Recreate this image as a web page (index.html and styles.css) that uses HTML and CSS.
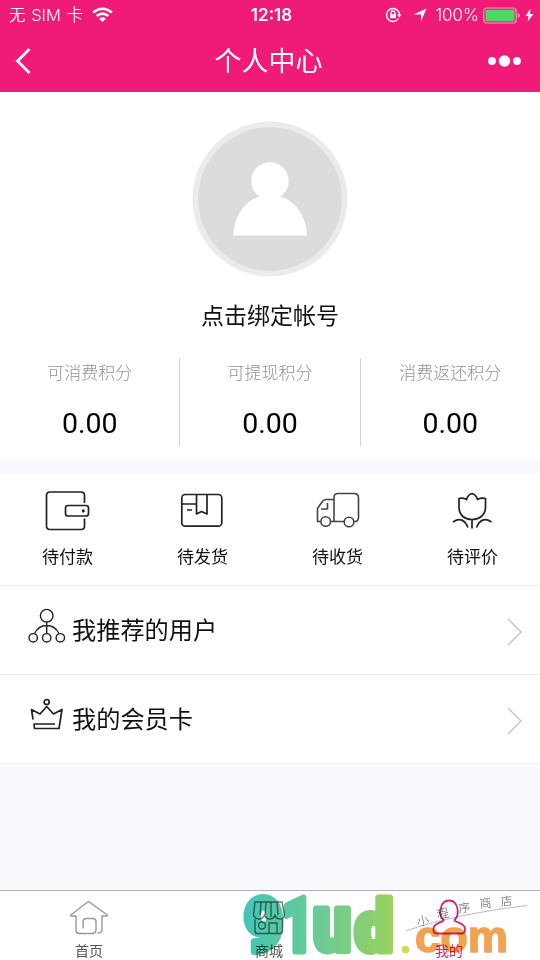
FILE: index.html
```html
<!DOCTYPE html>
<html lang="zh-CN">
<head>
<meta charset="utf-8">
<title>个人中心</title>
<link rel="stylesheet" href="styles.css">
</head>
<body>
<div class="app">
  <header class="header">
    <div class="status">
      <div class="carrier"><span>无 SIM 卡</span>
        <svg width="21" height="16" viewBox="0 0 21 16" fill="none" stroke="#fff" stroke-width="2.6"><path d="M1.2 5.5Q10.5-2 19.8 5.5M4.7 9Q10.5 4.2 16.3 9"/><path d="M10.5 15L7 11.7Q10.5 9 14 11.7Z" fill="#fff" stroke="none"/></svg>
      </div>
      <div class="clock">12:18</div>
      <div class="power">
        <svg class="lock" width="17" height="16" viewBox="0 0 17 16" fill="none" stroke="#fff" stroke-width="1.4"><path d="M14 5.5A6.5 6.5 0 1 0 13.5 11.5M14.3 5v4"/><path d="M12 7.5h4.5l-2.2 3z" fill="#fff" stroke="none"/><path d="M5 7.2h6v4H5z" fill="#fff" stroke="none"/><path d="M6.2 8V5.8a1.8 1.8 0 0 1 3.6 0V8"/></svg>
        <svg class="loc" width="14" height="14" viewBox="0 0 14 14"><path d="M13.5.5L8 13.5V6.5H.5z" fill="#fff"/></svg>
        <span>100%</span>
        <svg class="battery" width="38" height="17" viewBox="0 0 38 17"><rect x=".7" y="1" width="32.5" height="15" rx="3" fill="none" stroke="#f9a0ad" stroke-width="1.2"/><rect x="2.5" y="2.8" width="29" height="11.4" rx="1.3" fill="#4dd865"/><path d="M34.8 6v5q2-.8 2-2.5t-2-2.5" fill="#f9a0ad"/></svg>
        <svg width="9" height="14" viewBox="0 0 9 14"><path d="M5.5.5L.5 8h3L2.7 13.5 8.5 6H5z" fill="#fff"/></svg>
      </div>
    </div>
    <div class="nav">
      <svg width="18" height="28" viewBox="0 0 18 28" fill="none" stroke="#fff" stroke-width="2.8"><path d="M15.500 2L3.500 14l12 12"/></svg>
      <h1>个人中心</h1>
      <svg width="34" height="14" viewBox="0 0 34 14" fill="#fff"><circle cx="5" cy="7" r="3.9"/><circle cx="17.5" cy="7" r="5.7"/><circle cx="30" cy="7" r="3.9"/></svg>
    </div>
  </header>

  <section class="profile">
    <svg class="avatar" width="156" height="156" viewBox="0 0 156 156"><circle cx="78" cy="78" r="77.5" fill="#ebebeb"/><circle cx="78" cy="78" r="71.8" fill="#dcdcdc"/><circle cx="78" cy="60" r="18.7" fill="#fff"/><path d="M41.500 114.500C41.500 95 54 78 69 75.500H87C102 78 114.800 95 114.800 114.500Z" fill="#fff"/></svg>
    <div class="bind">点击绑定帐号</div>
    <div class="points">
      <div class="point"><span>可消费积分</span><b>0.00</b></div>
      <div class="point"><span>可提现积分</span><b>0.00</b></div>
      <div class="point"><span>消费返还积分</span><b>0.00</b></div>
    </div>
  </section>

  <section class="orders">
    <div class="order">
      <svg width="48" height="44" viewBox="0 0 48 44"><path d="M41.500 13V5.500Q41.500 2 38 2H7Q3.500 2 3.500 5.500V36Q3.500 39.500 7 39.500H38Q41.500 39.500 41.500 36V28.500"/><rect x="22.500" y="15.500" width="23" height="10.500" rx="2.500"/><circle cx="40.300" cy="20.900" r=".7"/></svg>
      <span>待付款</span></div>
    <div class="order">
      <svg width="48" height="44" viewBox="0 0 48 44"><rect x="3.800" y="4.500" width="40" height="31.700" rx="3.500"/><path d="M4 14H18.500M18.500 5V24L23.500 21.500 29 24V5M9 20H14"/></svg>
      <span>待发货</span></div>
    <div class="order truck">
      <svg width="48" height="44" viewBox="0 0 48 44"><path d="M21 31.500V7.500Q21 3.500 25 3.500H41Q45.500 3.500 45.500 8V27Q45.500 31.500 42 31.500H41M31.500 31.500H17.500M21 9.500H13Q10.500 9.500 9 12L4.500 18.500V31.500H7.500M14.500 13V19H8"/><circle cx="12.700" cy="31.500" r="4.800"/><circle cx="36" cy="32" r="4.800"/></svg>
      <span>待收货</span></div>
    <div class="order">
      <svg width="48" height="44" viewBox="0 0 48 44"><path d="M11 8.500Q14.500 7.500 18.500 9.500Q20 4.500 24 3.500Q28 4.500 29.500 9.500Q33.500 7.500 37.500 8.500V17C37.500 25 31.500 29.500 24 29.500S11 25 11 17ZM24 29.500V38.500M5 32Q15 25.500 20 37.500M43.500 32Q33.500 25.500 28.500 37.500"/></svg>
      <span>待评价</span></div>
  </section>

  <section class="list">
    <div class="row">
      <svg class="ricon" width="38" height="38" viewBox="0 0 38 38"><circle cx="18.700" cy="7.700" r="6.300"/><circle cx="5.200" cy="29.800" r="4.200"/><circle cx="18.700" cy="29.800" r="4.200"/><circle cx="32.300" cy="29.800" r="4.200"/><path d="M18.700 14V25.500M6.500 25.500Q10.500 17.500 18.700 17.500T31 25.500"/></svg>
      <span>我推荐的用户</span>
      <svg class="arrow" width="16" height="28" viewBox="0 0 16 28"><path d="M1 1l13 13L1 27"/></svg>
    </div>
    <div class="row">
      <svg class="ricon crown" width="38" height="38" viewBox="0 0 38 38"><circle cx="18.700" cy="6" r="2.500"/><path d="M5 23.500L3.500 13.500 12 18 18.700 10.500 25.500 18 34 13.500 31 32.500H6.500L6 28H27"/></svg>
      <span>我的会员卡</span>
      <svg class="arrow" width="16" height="28" viewBox="0 0 16 28"><path d="M1 1l13 13L1 27"/></svg>
    </div>
  </section>

  <footer class="tabs">
    <div class="tab">
      <svg width="40" height="38" viewBox="0 0 40 38"><path d="M7 17H2.500Q1 17 2 15.800L19.500 2.500 38 15.800Q39 17 37.500 17H33V31Q33 34 28.500 34M7 17V31Q7 34.500 10.500 34.500H23Q27 34.500 27 30.500V23Q27 19.500 23.500 19.500H17.500Q14 19.500 14 23V29.500"/></svg>
      <span>首页</span></div>
    <div class="tab shop">
      <svg width="40" height="38" viewBox="0 0 40 38"><path d="M6 3H33L35.500 16Q35 20 31 20T26 16Q25 20 21 20T15.500 16Q14 20 10 20T4.500 16ZM12 3L11 16M17 3L16 18M22 3V18M28 3L29 16M6 20V32Q6 34.500 8.500 34.500H31Q33.500 34.500 33.500 32V20M20 34V24H28V34"/><circle cx="13" cy="26.500" r="3.500"/></svg>
      <span>商城</span></div>
    <div class="tab mine">
      <svg width="40" height="38" viewBox="0 0 40 38"><path d="M14.500 21C9.500 16 10.500 1.500 20 1.500S31 16 25.500 21C25.500 24 36 23 36 30V31Q36 34.500 32.500 34.500H8Q4.500 34.500 4.500 31V30C4.500 23 15 24 14.500 21Z"/></svg>
      <span>我的</span></div>
  </footer>

  <svg class="watermark" width="300" height="70" viewBox="240 890 300 70">
    <defs><linearGradient id="brand" gradientUnits="userSpaceOnUse" x1="243" y1="0" x2="393" y2="0"><stop offset="0" stop-color="#42c5b5"/><stop offset=".5" stop-color="#6acb96"/><stop offset="1" stop-color="#98d160"/></linearGradient></defs>
    <g class="brand">
      <text x="244" y="950.500" textLength="39" lengthAdjust="spacingAndGlyphs">9</text>
      <text x="282" y="950.500" textLength="31" lengthAdjust="spacingAndGlyphs">1</text>
      <text class="bowl" x="313" y="949.500" textLength="38" lengthAdjust="spacingAndGlyphs">u</text>
      <text class="stem" x="355" y="950.500" textLength="38" lengthAdjust="spacingAndGlyphs">d</text>
    </g>
    <circle cx="405.500" cy="949.500" r="3.800" fill="#c6df4d"/>
    <text class="com" x="415" y="952" textLength="93" lengthAdjust="spacingAndGlyphs">com</text>
    <path d="M406 931Q450 915 527 905.500" fill="none" stroke="#aaa" stroke-width=".8"/>
    <g class="script">
      <text transform="translate(418 926) rotate(-12)">小</text>
      <text transform="translate(438 919) rotate(-12)">程</text>
      <text transform="translate(459 913) rotate(-8)">序</text>
      <text transform="translate(480 908) rotate(-6)">商</text>
      <text transform="translate(501 906) rotate(-6)">店</text>
    </g>
  </svg>
</div>
</body>
</html>
```
FILE: styles.css
```css
* { box-sizing: border-box; }
body { margin: 0; font-family: "Noto Sans CJK SC", sans-serif; color: #111; }
svg { display: block; flex: none; }
.app { position: relative; width: 540px; height: 960px; display: flex; flex-direction: column; background: #faf9fe; overflow: hidden; }

.header { height: 92px; background: #f01b79; color: #fff; }
.status { height: 30px; display: grid; grid-template-columns: 1fr auto 1fr; align-items: center; padding: 0 6px 0 9px; font-family: Inter, "Noto Sans CJK SC", sans-serif; font-size: 16.500px; font-weight: 350; line-height: 30px; }
.carrier, .power { display: flex; align-items: center; }
.carrier { gap: 9px; word-spacing: 1px; }
.clock { font-size: 17px; font-weight: 600; }
.power { justify-content: flex-end; font-size: 17px; }
.lock { margin-right: 11px; }
.loc { margin-right: 8px; }
.battery { margin: 0 4px; }
.nav { height: 62px; display: flex; align-items: center; justify-content: space-between; padding: 0 19px 0 14px; }
.nav h1 { margin: 0 0 0 18px; font-size: 27px; line-height: 40px; font-weight: 400; transform: translateY(-1px); }

.profile { height: 368px; background: #fff; padding-top: 29px; }
.avatar { margin: 0 auto; }
.bind { margin-top: 19px; text-align: center; font-size: 23px; line-height: 36px; }
.points { display: flex; height: 88px; margin-top: 26px; }
.point { flex: 1; display: flex; flex-direction: column; align-items: center; border-right: 1px solid #d2d2d2; }
.point:last-child { border-right: 0; }
.point span { color: #929292; font-size: 17px; line-height: 28px; font-weight: 300; }
.point b { font-family: Roboto, sans-serif; font-size: 28.500px; line-height: 34px; margin-top: 21px; font-weight: 400; color: #000; }

.orders { display: flex; height: 111px; margin-top: 14px; background: #fff; }
.order { flex: 1; display: flex; flex-direction: column; align-items: center; padding-top: 16px; }
.order svg, .ricon { fill: none; stroke: #222; stroke-width: 1.700; stroke-linejoin: round; }
.order svg { margin-right: 2px; }
.order.truck svg { stroke: #444; stroke-width: 1.600; }
.order span { margin-top: 10px; font-size: 17px; line-height: 24px; }

.row { height: 89px; display: flex; align-items: center; border-top: 1px solid #ededed; background: #fff; padding: 0 17px 0 28px; font-size: 24.200px; }
.row:last-child { border-bottom: 1px solid #f3f2f7; height: 90px; }
.row .ricon { margin: -7px 6px 0 0; stroke-width: 1.400; }
.row .crown { margin-top: -8px; stroke-width: 1.700; }
.row span { flex: 1; line-height: 36px; margin-top: -2px; }
.arrow { fill: none; stroke: #c8c8c8; stroke-width: 1.500; margin-top: 4px; }

.tabs { height: 70px; margin-top: auto; display: flex; border-top: 1px solid #b5b2b8; background: #fff; }
.tab { flex: 1; display: flex; flex-direction: column; align-items: center; padding: 8px 2px 0 0; color: #555; font-size: 14px; line-height: 20px; }
.tab svg { fill: none; stroke: #999; stroke-width: 1.400; stroke-linejoin: round; }
.tab.shop svg { stroke: #777; }
.tab span { margin-top: 3px; }
.tab.mine { color: #e51b75; }
.tab.mine svg { stroke: #d5246f; stroke-width: 1.800; }

.watermark { position: absolute; left: 240px; top: 890px; mix-blend-mode: multiply; }
.brand { font-family: Roboto, sans-serif; font-weight: 900; font-size: 74px; fill: url(#brand); stroke: url(#brand); stroke-width: 7px; stroke-linejoin: round; }
.brand .bowl { font-size: 78px; }
.brand .stem { font-size: 71px; }
.com { font-family: "Liberation Sans", sans-serif; font-weight: 700; font-size: 44px; fill: #f0a352; stroke: #f0a352; stroke-width: 1.500px; stroke-linejoin: round; }
.script { font-family: "Noto Sans CJK SC", sans-serif; font-size: 12px; font-weight: 300; fill: #555; }
```
